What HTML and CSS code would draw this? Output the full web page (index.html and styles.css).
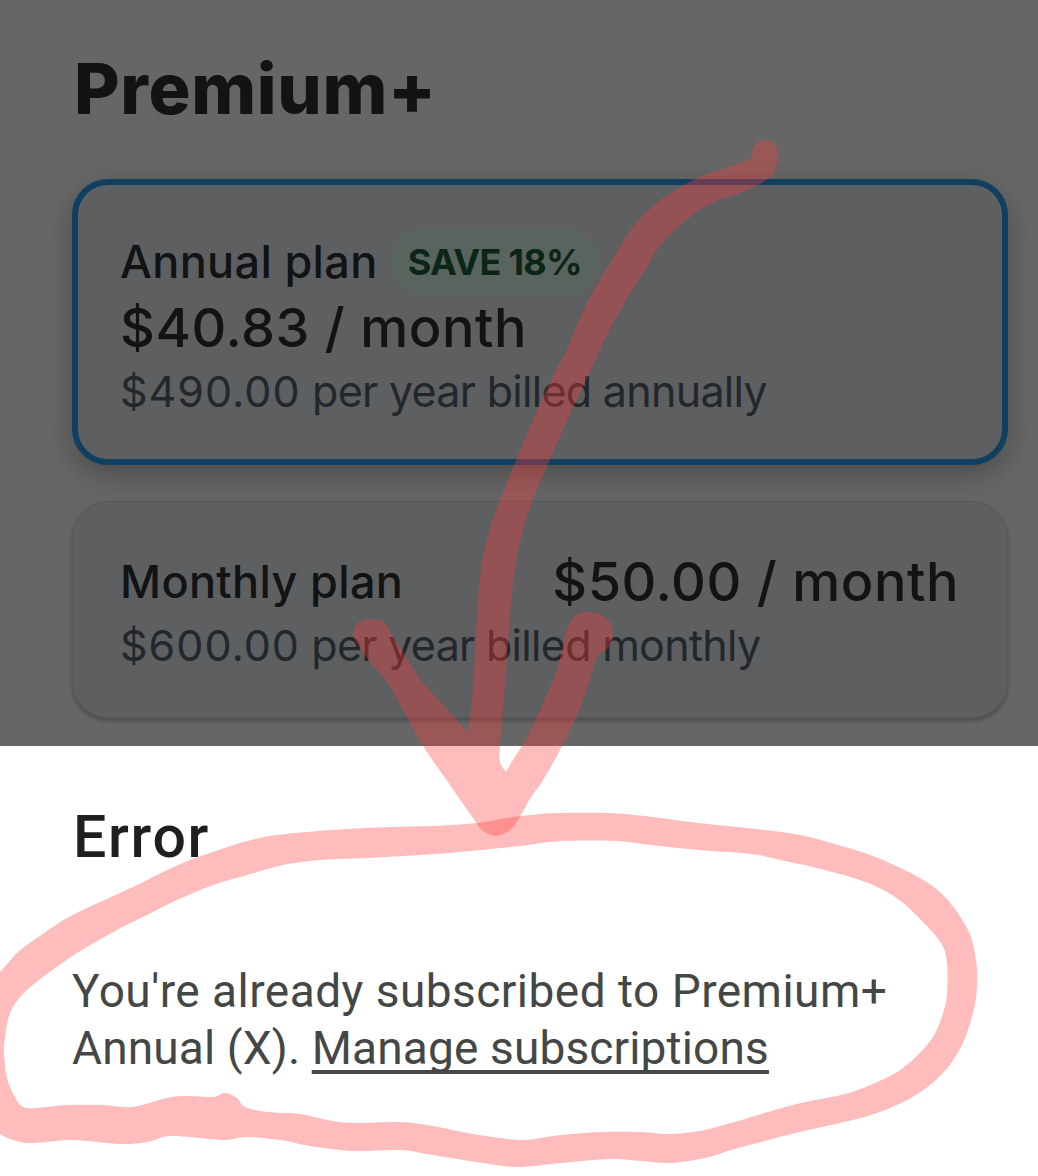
FILE: index.html
```html
<!DOCTYPE html>
<html lang="en">
<head>
    <meta charset="UTF-8">
    <meta name="viewport" content="width=device-width, initial-scale=1.0">
    <title>Premium+</title>
    <link rel="stylesheet" href="styles.css">
</head>
<body>
    <main class="plans">
        <h1>Premium+</h1>

        <div class="plan selected">
            <div class="plan-title">
                <span class="plan-name">Annual plan</span>
                <span class="badge">SAVE 18%</span>
            </div>
            <div class="price">$40.83 / month</div>
            <div class="billing"><span class="amount">$490.00</span> per year billed annually</div>
        </div>

        <div class="plan">
            <div class="plan-row">
                <span class="plan-name">Monthly plan</span>
                <span class="price">$50.00 / month</span>
            </div>
            <div class="billing"><span class="amount">$600.00</span> per year billed monthly</div>
        </div>
        <div class="scrim"></div>
    </main>

    <section class="sheet">
        <h2>Error</h2>
        <p><span class="lead">You're already subscribed to Premium+</span><br>Annual (X). <a href="#">Manage subscriptions</a></p>
    </section>

    <svg class="marker" width="1038" height="1176" viewBox="0 0 1038 1176" aria-hidden="true">
        <path id="arrow"/>
        <path id="circle" fill-rule="evenodd"/>
    </svg>

    <script>
        const arrow = [
            [752,151],[756,143],[765,140],[774,143],[778,152],[776,167],[770,177],[758,185],[738,194],[716,201],
            [695,213],[676,229],[659,247],[644,272],[625,302],[606,337],[590,372],[571,412],[551,457],[534,497],
            [523,530],[516,563],[511,603],[507,660],[502,720],[500,747],[500,762],[506,772],[506,772],[513,760],
            [527,737],[543,703],[556,673],[563,645],[568,627],[576,615],[588,612],[601,615],[610,623],[613,637],
            [608,648],[597,657],[590,680],[577,715],[560,750],[543,780],[530,799],[518,820],[510,830],[496,836],
            [482,830],[473,818],[450,785],[423,746],[403,710],[387,682],[370,662],[360,648],[353,635],[358,623],
            [372,619],[385,623],[393,636],[410,663],[423,683],[443,705],[468,732],[468,732],[472,700],[475,655],
            [478,600],[482,563],[490,528],[503,492],[520,451],[537,411],[551,380],[568,347],[579,320],[594,290],
            [608,267],[625,238],[643,215],[665,197],[695,179],[725,168],[750,159]
        ];
        const outer = [
            [0,972],[17,953],[37,938],[67,918],[100,902],[133,887],[163,872],[190,860],[213,852],[240,843],
            [270,836],[307,832],[347,829],[390,827],[433,826],[477,823],[513,817],[531,815],[558,813],[608,813],
            [645,816],[698,823],[765,830],[805,836],[845,847],[878,858],[918,877],[945,897],[968,930],[976,960],
            [977,987],[973,1013],[961,1047],[941,1075],[911,1098],[871,1115],[831,1125],[795,1133],[761,1142],
            [731,1150],[705,1158],[671,1163],[641,1161],[611,1159],[561,1163],[518,1167],[483,1163],[433,1155],
            [400,1150],[353,1151],[310,1146],[280,1140],[247,1137],[227,1140],[210,1139],[170,1136],[147,1142],
            [120,1144],[73,1140],[33,1143],[17,1141],[0,1134],[-30,1110],[-30,1000]
        ];
        const inner = [
            [4,1053],[5,1037],[10,1013],[22,995],[43,977],[77,953],[117,930],[147,915],[177,900],[213,885],
            [247,875],[283,865],[320,860],[367,858],[420,855],[460,852],[520,846],[561,841],[615,841],[651,845],
            [698,850],[751,854],[785,861],[825,870],[868,883],[898,899],[921,920],[941,943],[947,963],[947,993],
            [943,1013],[931,1040],[903,1068],[875,1083],[845,1094],[801,1103],[768,1112],[731,1123],[705,1130],
            [685,1133],[665,1134],[641,1132],[601,1132],[561,1135],[525,1140],[500,1138],[467,1133],[433,1126],
            [400,1122],[353,1123],[327,1120],[300,1114],[267,1112],[245,1107],[237,1098],[225,1093],[213,1097],
            [187,1096],[167,1098],[133,1107],[103,1105],[67,1105],[27,1108],[15,1097],[7,1078]
        ];

        // closed smooth curve through all the points
        function smooth(pts) {
            const n = pts.length;
            let d = `M${pts[0]}`;
            for (let i = 0; i < n; i++) {
                const [a, b, c, e] = [pts[(i + n - 1) % n], pts[i], pts[(i + 1) % n], pts[(i + 2) % n]];
                d += `C${b[0] + (c[0] - a[0]) / 6},${b[1] + (c[1] - a[1]) / 6} ${c[0] - (e[0] - b[0]) / 6},${c[1] - (e[1] - b[1]) / 6} ${c}`;
            }
            return d + 'Z';
        }

        document.getElementById('arrow').setAttribute('d', smooth(arrow));
        document.getElementById('circle').setAttribute('d', smooth(outer) + smooth(inner));
    </script>
</body>
</html>
```
FILE: styles.css
```css
* {
    box-sizing: border-box;
}
body {
    margin: 0;
    position: relative;
    height: 1176px;
    overflow: hidden;
    background: #fff;
    font-family: Inter, "Liberation Sans", sans-serif;
    color: #2c3136;
}
.plans {
    position: relative;
    height: 746px;
    padding: 46px 30px 0 72px;
    overflow: hidden;
}
h1 {
    margin: 0 0 47px 2px;
    font-size: 70px;
    line-height: 86px;
    font-weight: 800;
    letter-spacing: 0.7px;
}
.plan {
    height: 217px;
    padding: 47px 48px 0 47px;
    border: 1px solid #dadee2;
    border-radius: 36px;
    background: #ebeef2;
    box-shadow: 0 3px 4px rgba(0,0,0,0.25);
}
.plan.selected {
    height: 286px;
    margin-bottom: 36px;
    padding: 43px 43px 0 42px;
    border: 6px solid #2c9eef;
    box-shadow: 0 10px 30px rgba(0,0,0,0.25);
}
.plan-title {
    display: flex;
    align-items: center;
    gap: 12px;
    height: 67px;
}
.plan-row {
    display: flex;
    justify-content: space-between;
    align-items: center;
    height: 66px;
}
.plan-name {
    font-size: 45px;
    line-height: 66px;
    font-weight: 500;
    letter-spacing: 0.35px;
    white-space: nowrap;
}
.badge {
    height: 66px;
    padding: 0 17px 0 18px;
    border-radius: 33px;
    background: #e1faeb;
    color: #1c5c40;
    font-size: 36px;
    line-height: 66px;
    font-weight: 700;
    letter-spacing: -0.7px;
    white-space: nowrap;
}
.price {
    font-size: 54px;
    line-height: 66px;
    font-weight: 500;
    letter-spacing: 0.55px;
    white-space: nowrap;
}
.billing {
    font-size: 43px;
    line-height: 61px;
    color: #56626e;
    letter-spacing: -0.7px;
    white-space: nowrap;
}
.amount {
    letter-spacing: 1px;
}
.scrim {
    position: absolute;
    inset: 0;
    background: rgba(0,0,0,0.6);
}
.sheet {
    padding: 55px 72px 0;
    font-family: Roboto, "Liberation Sans", sans-serif;
    color: #444746;
}
h2 {
    margin: 0 0 90px 1px;
    font-size: 59px;
    line-height: 72px;
    font-weight: 500;
    letter-spacing: 1.7px;
    color: #1f1f1f;
}
.sheet p {
    margin: 0;
    font-size: 46px;
    line-height: 57px;
    letter-spacing: 0.15px;
    white-space: nowrap;
}
.lead {
    letter-spacing: 0.47px;
}
.sheet a {
    color: inherit;
    text-decoration: underline;
    text-decoration-thickness: 4px;
    text-decoration-skip-ink: none;
    text-underline-offset: 6px;
}
.marker {
    position: absolute;
    top: 0;
    left: 0;
    fill: rgba(255,58,58,0.34);
    pointer-events: none;
}
```
